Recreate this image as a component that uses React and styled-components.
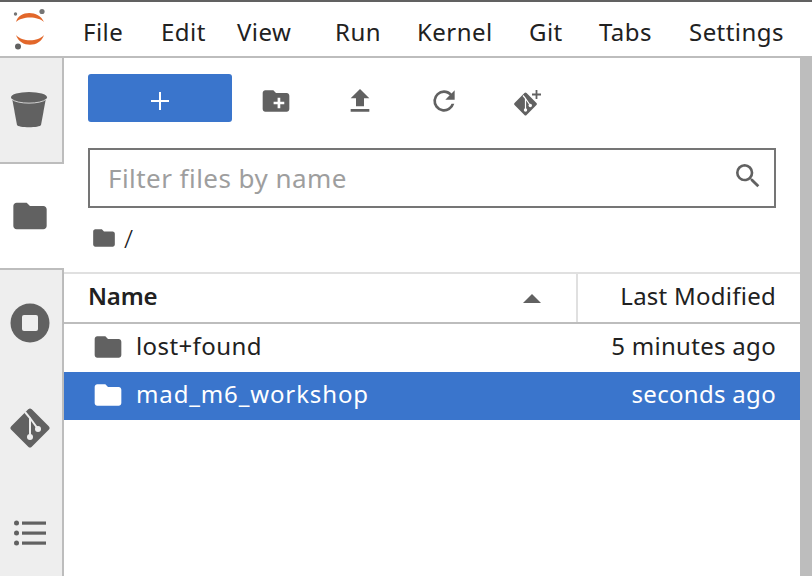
import React from 'react'
import styled, { createGlobalStyle } from 'styled-components'

const GlobalStyle = createGlobalStyle`
  html, body { margin: 0; padding: 0; background: #fff; }
  body { font-family: "Noto Sans", "Open Sans", sans-serif; color: #212121; }
`

const FOLDER = 'M10 4H4c-1.1 0-1.99.9-1.99 2L2 18c0 1.1.9 2 2 2h16c1.1 0 2-.9 2-2V8c0-1.1-.9-2-2-2h-8l-2-2z'

const FolderIcon = ({ size, color = '#616161' }) => (
  <svg width={size} height={size} viewBox="0 0 24 24"><path fill={color} d={FOLDER} /></svg>
)

const Logo = () => (
  <svg width="36" height="44" viewBox="0 0 36 44">
    <path fill="#e2672a" d="M3 15 C6 3 26 3 31 15 C25 9 9 9 3 15z" />
    <path fill="#e2672a" d="M3 28 C9 35 25 35 31 28 C27 41 7 41 3 28z" />
    <circle cx="29" cy="4.5" r="2.6" fill="#757575" />
    <circle cx="2.5" cy="7" r="1.7" fill="#757575" />
    <circle cx="5" cy="39.5" r="3" fill="#616161" />
  </svg>
)

const BucketIcon = () => (
  <svg width="38" height="38" viewBox="0 0 38 38">
    <path fill="#616161" d="M1 7 L35 7 L30 34 C29 37 7 37 6 34z" />
    <ellipse cx="18" cy="6.5" rx="18" ry="5.5" fill="#616161" />
    <path fill="none" stroke="#eee" strokeWidth="0.8" d="M0.5 8 C6 13.5 30 13.5 35.5 8" />
  </svg>
)

const StopIcon = () => (
  <svg width="40" height="40" viewBox="0 0 40 40">
    <circle cx="20" cy="20" r="19.5" fill="#616161" />
    <rect x="12" y="12" width="16" height="16" rx="2" fill="#eee" />
  </svg>
)

const GitIcon = ({ size, bg = '#eee' }) => (
  <svg width={size} height={size} viewBox="0 0 40 40">
    <rect x="5.5" y="5.5" width="29" height="29" rx="2.5" fill="#616161" transform="rotate(45 20 20)" />
    <path fill="none" stroke={bg} strokeWidth="2" d="M15 4 L20 10 V29 M20 10 L28 21" />
    <circle cx="20" cy="29" r="3" fill={bg} />
    <circle cx="28" cy="21" r="3" fill={bg} />
  </svg>
)

const ListIcon = () => (
  <svg width="32" height="26" viewBox="0 0 32 26">
    <g fill="#616161">
      <circle cx="2.5" cy="3" r="2.5" /><rect x="8" y="1.5" width="24" height="3.2" />
      <circle cx="2.5" cy="13" r="2.5" /><rect x="8" y="11.5" width="24" height="3.2" />
      <circle cx="2.5" cy="23" r="2.5" /><rect x="8" y="21.5" width="24" height="3.2" />
    </g>
  </svg>
)

const NewFolderIcon = () => (
  <svg width="32" height="32" viewBox="0 0 24 24">
    <path fill="#616161" d={FOLDER} />
    <path fill="#fff" d="M13.2 9.5h2v3h3v2h-3v3h-2v-3h-3v-2h3z" />
  </svg>
)

const UploadIcon = () => (
  <svg width="32" height="32" viewBox="0 0 24 24">
    <path fill="#616161" d="M9 16h6v-6h4l-7-7-7 7h4zm-4 2h14v2H5z" />
  </svg>
)

const RefreshIcon = () => (
  <svg width="32" height="32" viewBox="0 0 24 24">
    <path fill="#616161" d="M17.65 6.35A7.96 7.96 0 0 0 12 4a8 8 0 1 0 7.73 10h-2.08A6 6 0 1 1 12 6c1.66 0 3.14.69 4.22 1.78L13 11h7V4l-2.35 2.35z" />
  </svg>
)

const GitCloneIcon = () => (
  <svg width="32" height="32" viewBox="0 0 32 32">
    <rect x="5" y="10.5" width="17" height="17" rx="1.5" fill="#616161" transform="rotate(45 13.5 19)" />
    <path fill="none" stroke="#fff" strokeWidth="1.2" d="M11 10.5 L13.5 13.5 V25 M13.5 13.5 L18 20" />
    <circle cx="13.5" cy="25" r="1.7" fill="#fff" />
    <circle cx="18.3" cy="20.5" r="1.7" fill="#fff" />
    <path fill="none" stroke="#616161" strokeWidth="1.8" d="M24.5 5 V14 M20 9.5 H29" />
  </svg>
)

const SearchIcon = () => (
  <svg width="32" height="32" viewBox="0 0 24 24">
    <path fill="#616161" d="M15.5 14h-.79l-.28-.27A6.47 6.47 0 0 0 16 9.5 6.5 6.5 0 1 0 9.5 16c1.61 0 3.09-.59 4.23-1.57l.27.28v.79l5 4.99L20.49 19l-4.99-5zm-6 0C7.01 14 5 11.99 5 9.5S7.01 5 9.5 5 14 7.01 14 9.5 11.99 14 9.5 14z" />
  </svg>
)

const MENU = [
  { label: 'File', width: 78 },
  { label: 'Edit', width: 76 },
  { label: 'View', width: 98 },
  { label: 'Run', width: 82 },
  { label: 'Kernel', width: 112 },
  { label: 'Git', width: 70 },
  { label: 'Tabs', width: 90 },
  { label: 'Settings', width: 114 },
]
const TABS = [BucketIcon, FolderTab, StopIcon, GitTab, ListIcon]

function FolderTab() {
  return <FolderIcon size={40} />
}
function GitTab() {
  return <GitIcon size={40} />
}

const App = () => (
  <>
    <GlobalStyle />
    <Page>
      <TopBar>
        <LogoBox><Logo /></LogoBox>
        <Menu>
          {MENU.map((m) => <MenuItem key={m.label} $width={m.width}>{m.label}</MenuItem>)}
        </Menu>
      </TopBar>
      <Main>
        <Sidebar>
          {TABS.map((Icon, i) => (
            <Tab key={i} $active={i === 1} $afterActive={i === 2}><Icon /></Tab>
          ))}
        </Sidebar>
        <Browser>
          <Toolbar>
            <NewButton>
              <svg width="20" height="20" viewBox="0 0 20 20">
                <path fill="none" stroke="#fff" strokeWidth="2" d="M10 1 V19 M1 10 H19" />
              </svg>
            </NewButton>
            <ToolIcon><NewFolderIcon /></ToolIcon>
            <ToolIcon><UploadIcon /></ToolIcon>
            <ToolIcon><RefreshIcon /></ToolIcon>
            <ToolIcon><GitCloneIcon /></ToolIcon>
          </Toolbar>
          <Filter>
            <FilterText>Filter files by name</FilterText>
            <SearchBox><SearchIcon /></SearchBox>
          </Filter>
          <Crumbs>
            <FolderIcon size={26} />
            <Slash>/</Slash>
          </Crumbs>
          <HeaderRow>
            <NameHead>
              Name
              <SortArrow />
            </NameHead>
            <DateHead>Last Modified</DateHead>
          </HeaderRow>
          <FileRow>
            <FileIcon><FolderIcon size={32} /></FileIcon>
            <FileName>lost+found</FileName>
            <Modified>5 minutes ago</Modified>
          </FileRow>
          <FileRow $selected>
            <FileIcon><FolderIcon size={32} color="#fff" /></FileIcon>
            <FileName $selected>mad_m6_workshop</FileName>
            <Modified>seconds ago</Modified>
          </FileRow>
        </Browser>
        <RightEdge />
      </Main>
    </Page>
  </>
)

export default App

const Page = styled.div`
  width: 812px;
  height: 576px;
  overflow: hidden;
  display: flex;
  flex-direction: column;
`
const TopBar = styled.div`
  height: 54px;
  flex-shrink: 0;
  display: flex;
  border-top: 2px solid #616161;
  border-bottom: 2px solid #bdbdbd;
  background: #fff;
`
const LogoBox = styled.div`
  width: 64px;
  display: flex;
  align-items: center;
  padding-left: 13px;
  box-sizing: border-box;
`
const Menu = styled.div`
  display: flex;
`
const MenuItem = styled.div`
  width: ${(p) => p.$width}px;
  box-sizing: border-box;
  padding-left: 19px;
  line-height: 60px;
  font-size: 24px;
  color: #212121;
  white-space: nowrap;
  letter-spacing: 0.45px;
`
const Main = styled.div`
  flex: 1;
  display: flex;
  min-height: 0;
`
const Sidebar = styled.div`
  width: 64px;
  flex-shrink: 0;
  display: flex;
  flex-direction: column;
  background: #eee;
`
const Tab = styled.div`
  height: ${(p) => (p.$active ? '104px' : '105px')};
  flex-shrink: 0;
  display: flex;
  align-items: center;
  justify-content: center;
  box-sizing: content-box;
  width: 60px;
  padding-right: ${(p) => (p.$active ? '4px' : '2px')};
  background: ${(p) => (p.$active ? '#fff' : '#eee')};
  border-right: ${(p) => (p.$active ? 'none' : '2px solid #bdbdbd')};
  border-top: ${(p) => (p.$afterActive ? '2px solid #bdbdbd' : 'none')};
  &:first-child { border-bottom: 2px solid #bdbdbd; height: 104px; }
`
const Browser = styled.div`
  flex: 1;
  min-width: 0;
  display: flex;
  flex-direction: column;
  background: #fff;
`
const Toolbar = styled.div`
  display: flex;
  align-items: center;
  height: 48px;
  margin: 16px 0 0 24px;
`
const NewButton = styled.div`
  width: 144px;
  height: 48px;
  box-sizing: border-box;
  padding-top: 6px;
  border-radius: 3px;
  background: #3a75cc;
  display: flex;
  align-items: center;
  justify-content: center;
  margin-right: 2px;
`
const ToolIcon = styled.div`
  width: 84px;
  padding-top: 5px;
  display: flex;
  justify-content: center;
`
const Filter = styled.div`
  display: flex;
  align-items: center;
  justify-content: space-between;
  box-sizing: border-box;
  width: 688px;
  height: 60px;
  margin: 26px 0 0 24px;
  padding: 0 10px 0 18px;
  border: 2px solid #757575;
`
const FilterText = styled.div`
  font-size: 26px;
  letter-spacing: 0.45px;
  color: #9e9e9e;
`
const SearchBox = styled.div`
  display: flex;
  margin-top: -4px;
`
const Crumbs = styled.div`
  display: flex;
  align-items: center;
  height: 32px;
  margin: 14px 0 0 27px;
`
const Slash = styled.span`
  font-size: 26px;
  font-weight: 300;
  margin-left: 7px;
  color: #212121;
`
const HeaderRow = styled.div`
  display: flex;
  height: 48px;
  flex-shrink: 0;
  margin-top: 18px;
  border-top: 2px solid #e0e0e0;
  border-bottom: 2px solid #bdbdbd;
  box-shadow: 0 1px 1px rgba(0, 0, 0, 0.1);
`
const NameHead = styled.div`
  position: relative;
  width: 514px;
  box-sizing: border-box;
  padding-left: 24px;
  font-size: 24px;
  font-weight: 600;
  letter-spacing: -0.2px;
  line-height: 44px;
  border-right: 2px solid #e0e0e0;
  color: #212121;
`
const SortArrow = styled.span`
  position: absolute;
  right: 35px;
  top: 20px;
  width: 0;
  height: 0;
  border-left: 9px solid transparent;
  border-right: 9px solid transparent;
  border-bottom: 9px solid #616161;
`
const DateHead = styled.div`
  flex: 1;
  text-align: right;
  padding-right: 24px;
  font-size: 24px;
  letter-spacing: 0.25px;
  line-height: 44px;
  color: #212121;
`
const FileRow = styled.div`
  display: flex;
  align-items: center;
  height: 48px;
  flex-shrink: 0;
  padding: 0 24px;
  background: ${(p) => (p.$selected ? '#3a75cc' : '#fff')};
  color: ${(p) => (p.$selected ? '#fff' : '#212121')};
`
const FileIcon = styled.div`
  width: 48px;
  display: flex;
  align-items: center;
  padding-left: 4px;
  margin-top: -2px;
  box-sizing: border-box;
`
const FileName = styled.div`
  flex: 1;
  font-size: 24px;
  margin-top: -6px;
  letter-spacing: ${(p) => (p.$selected ? '0.87px' : '0.4px')};
`
const Modified = styled.div`
  font-size: 24px;
  margin-top: -6px;
  letter-spacing: 0.3px;
`
const RightEdge = styled.div`
  width: 12px;
  flex-shrink: 0;
  background: #bdbdbd;
`
